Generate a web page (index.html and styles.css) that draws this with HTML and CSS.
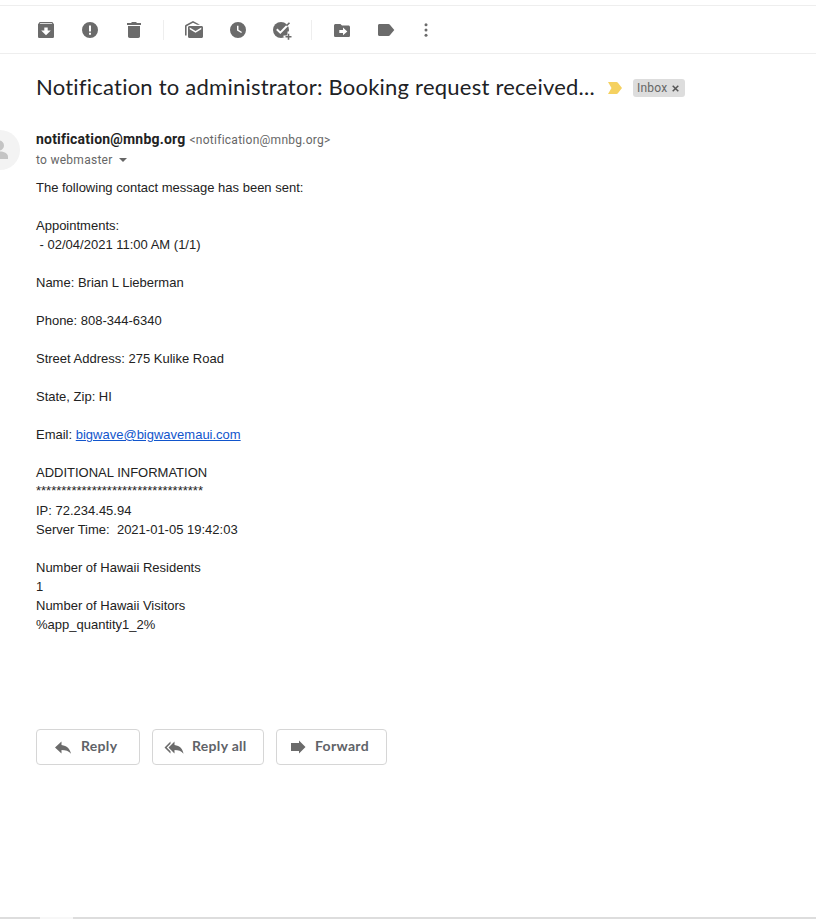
FILE: index.html
```html
<!DOCTYPE html>
<html lang="en">
  <head>
    <meta charset="UTF-8">
    <title>Notification to administrator: Booking request received...</title>
    <link rel="stylesheet" href="styles.css">
  </head>
  <body>
    <div class="toolbar">
      <span class="tool"><svg class="icon" viewBox="0 0 20 20"><path fill-rule="evenodd" d="M3.7 2h12.6L18 4.2V16.4c0 .9-.7 1.6-1.6 1.6H3.6c-.9 0-1.6-.7-1.6-1.6V4.2zM4.200 3.200l-.5.8h12.600l-.5-.8zM8.300 7.500v3H5.200L10 15.200l4.800-4.700h-3.100v-3z"/></svg></span>
      <span class="tool"><svg class="icon" viewBox="0 0 20 20"><path fill-rule="evenodd" d="M10 2a8 8 0 1 1 0 16 8 8 0 0 1 0-16zM9 5.500V11.500h2v-6zM9 12.800v2h2v-2z"/></svg></span>
      <span class="tool"><svg class="icon" viewBox="0 0 20 20"><path d="M4 6h12v10.300c0 .9-.8 1.700-1.700 1.700H5.700C4.800 18 4 17.200 4 16.300zM3 3h4l1-1h4l1 1h4v2H3z"/></svg></span>
      <span class="divider"></span>
      <span class="tool"><svg class="icon" viewBox="0 0 20 20"><path d="M1 15.500V6.300c0-.7.3-1.200.9-1.500L9 1l7 3.800H13.200L9 2.700 2.600 6.200v9.300z"/><path fill-rule="evenodd" d="M5.500 6h12c.9 0 1.500.6 1.500 1.500v9c0 .9-.6 1.500-1.500 1.500h-12c-.9 0-1.500-.6-1.500-1.500v-9C4 6.600 4.600 6 5.500 6zM5.700 7.600v1.700l5.800 3.500 5.800-3.500V7.600l-5.800 3.500z"/></svg></span>
      <span class="tool"><svg class="icon" viewBox="0 0 20 20"><path fill-rule="evenodd" d="M10 2a8 8 0 1 1 0 16 8 8 0 0 1 0-16zM9 5.800v4.800l4.200 2.500.8-1.200-3.500-2.100v-4z"/></svg></span>
      <span class="tool"><svg class="icon" viewBox="0 0 20 20"><circle cx="9" cy="10" r="8"/><path class="cut" d="M4.800 9.300l3.500 3.400 8.700-8.900M11.500 16.500h9M16.500 11.500v9"/><path class="line" d="M14.500 5.800l3-3.100M13.500 16.800h6M16.500 13.800v6"/></svg></span>
      <span class="divider"></span>
      <span class="tool"><svg class="icon" viewBox="0 0 20 20"><path fill-rule="evenodd" d="M3.600 4h4.800l1.600 1.600h6.400c.9 0 1.600.7 1.600 1.600v8.200c0 .9-.7 1.600-1.600 1.600H3.600c-.9 0-1.600-.7-1.600-1.600V5.600C2 4.700 2.700 4 3.600 4zM11 7.500v2.400H7.300v3H11v2.400l4.300-3.900z"/></svg></span>
      <span class="tool"><svg class="icon" viewBox="0 0 20 20"><path d="M3.500 4h9c.6 0 1 .2 1.400.7L18.300 10l-4.400 5.300c-.4.5-.8.7-1.400.7h-9c-.9 0-1.500-.6-1.500-1.500v-9C2 4.600 2.600 4 3.500 4z"/></svg></span>
      <span class="tool more"><svg class="icon" viewBox="0 0 20 20"><circle cx="10" cy="4.700" r="1.500"/><circle cx="10" cy="10" r="1.500"/><circle cx="10" cy="15.300" r="1.500"/></svg></span>
    </div>

    <div class="subject">
      <h1>Notification to administrator: Booking request received...</h1>
      <svg class="important" viewBox="0 0 14 12"><path d="M0 0h8.500c.6 0 1 .2 1.400.7L14 6l-4.100 5.300c-.4.5-.8.7-1.400.7H0l3.500-6z"/></svg>
      <span class="chip">Inbox
        <svg class="close" viewBox="0 0 7 7"><path d="M.7.700l5.600 5.600M6.300.700L.7 6.300"/></svg>
      </span>
    </div>

    <div class="message">
      <svg class="avatar" viewBox="0 0 40 40"><circle class="disc" cx="20" cy="20" r="20"/><circle cx="19" cy="15.500" r="5"/><path d="M9.500 29v-2.200c0-3.600 7-5.300 10.500-5.300s8 1.700 8 5.300V29z"/></svg>
      <div class="content">
        <div class="from"><b class="sender">notification@mnbg.org</b> <span class="address">&lt;notification@mnbg.org&gt;</span></div>
        <div class="to">to webmaster <span class="caret"></span></div>
        <div class="text">
          <p>The following contact message has been sent:</p>
          <p>Appointments:<br>&nbsp;- 02/04/2021 11:00 AM (1/1)</p>
          <p>Name: Brian L Lieberman</p>
          <p>Phone: 808-344-6340</p>
          <p>Street Address: 275 Kulike Road</p>
          <p>State, Zip: HI</p>
          <p>Email: <a href="mailto:bigwave@bigwavemaui.com">bigwave@bigwavemaui.com</a></p>
          <p>ADDITIONAL INFORMATION<br><span class="stars">*********************************</span><br>IP: 72.234.45.94<br>Server Time:&nbsp; 2021-01-05 19:42:03</p>
          <p>Number of Hawaii Residents<br>1<br>Number of Hawaii Visitors<br>%app_quantity1_2%</p>
        </div>
        <div class="actions">
          <button class="reply"><svg class="icon" viewBox="0 0 20 20"><path d="M8.500 8V4.500L2 10.500l6.500 6V13c4.200 0 7.200 1 9.500 3.800C17 12 14 8.700 8.500 8z"/></svg><span class="label">Reply</span></button>
          <button class="reply-all"><svg class="icon" viewBox="0 0 20 20"><path d="M10.500 8V4.500L4.500 10.500l6 6V13c4 0 6.800 1 9 3.800C18.700 12 16 8.700 10.500 8z"/><path d="M6.500 4.500v2.200L2.700 10.500l3.800 3.800v2.200l-6-6z"/></svg><span class="label">Reply all</span></button>
          <button class="forward"><svg class="icon" viewBox="0 0 20 20"><path d="M3 6h8V3.500l6.500 6.500-6.500 6.500V14H3z"/></svg><span class="label">Forward</span></button>
        </div>
      </div>
    </div>

    <div class="bottom"><span class="tab"></span></div>
  </body>
</html>
```
FILE: styles.css
```css
body {
  margin: 0;
  height: 919px;
  display: flex;
  flex-direction: column;
  overflow: hidden;
  background: #fff;
  color: #222;
  font-family: Roboto, "Liberation Sans", sans-serif;
}

.toolbar {
  display: flex;
  align-items: center;
  box-sizing: border-box;
  height: 49px;
  margin-top: 5px;
  padding-left: 24px;
  border-top: 1px solid #eee;
  border-bottom: 1px solid #eee;
}

.tool {
  display: flex;
  justify-content: center;
  width: 44px;
}

.more {
  width: 36px;
}

.icon {
  width: 20px;
  height: 20px;
  fill: #6b6b6b;
}

.cut, .line {
  fill: none;
  stroke: #fff;
  stroke-width: 2;
}

.line {
  stroke: #6b6b6b;
  stroke-width: 1.6;
}

.divider {
  width: 1px;
  height: 20px;
  margin: 0 8px 0 7px;
  background: #eee;
}

.subject {
  display: flex;
  align-items: center;
  height: 28px;
  padding: 20px 0 0 36px;
}

h1 {
  width: 572px;
  margin: 0 0 2px;
  font: 400 22px/28px Lato, sans-serif;
  letter-spacing: 0.23px;
  color: #202124;
  white-space: nowrap;
}

.important {
  width: 14px;
  height: 12px;
  margin-right: 11px;
  fill: #f5d160;
}

.chip {
  display: flex;
  align-items: center;
  box-sizing: border-box;
  width: 52px;
  height: 18px;
  padding-left: 4px;
  gap: 5px;
  border-radius: 3px;
  background: #ddd;
  color: #666;
  font-size: 12px;
  letter-spacing: 0.2px;
}

.close {
  width: 7px;
  height: 7px;
  stroke: #555;
  stroke-width: 1.5;
}

.message {
  display: flex;
  padding-top: 27px;
}

.avatar {
  flex: none;
  width: 40px;
  height: 40px;
  margin: 1px 16px 0 -20px;
  fill: #c4c4c4;
}

.disc {
  fill: #f3f3f3;
}

.from {
  line-height: 20px;
  white-space: nowrap;
}

.sender {
  font-size: 14px;
  letter-spacing: 0.2px;
}

.address, .to {
  font-size: 12px;
  letter-spacing: 0.27px;
  color: #666;
}

.to {
  line-height: 20px;
}

.caret {
  display: inline-block;
  margin-left: 3px;
  vertical-align: 2px;
  border: 4px solid transparent;
  border-top-color: #666;
  border-bottom: 0;
}

.text {
  padding-top: 8px;
  font: 13px/19px "Liberation Sans", sans-serif;
}

.text p {
  margin: 0 0 19px;
}

.text a {
  color: #15c;
}

.stars {
  vertical-align: 1px;
  line-height: 17px;
}

.actions {
  display: flex;
  gap: 12px;
  padding-top: 76px;
}

button {
  display: flex;
  align-items: center;
  box-sizing: border-box;
  height: 36px;
  padding: 0;
  border: 1px solid #d6d6d6;
  border-radius: 4px;
  background: #fff;
  color: #5f6368;
  font: 700 14px Lato, sans-serif;
  letter-spacing: 0.3px;
}

.label {
  margin-bottom: 3px;
}

.reply {
  width: 104px;
  padding-left: 16px;
  gap: 8px;
}

.reply-all {
  width: 112px;
  padding-left: 11px;
  gap: 8px;
}

.forward {
  width: 111px;
  padding-left: 11px;
  gap: 7px;
}

.bottom {
  height: 2px;
  margin-top: auto;
  background: #ddd;
}

.tab {
  display: block;
  width: 33px;
  height: 2px;
  margin-left: 40px;
  background: #f7f7f7;
}
```
